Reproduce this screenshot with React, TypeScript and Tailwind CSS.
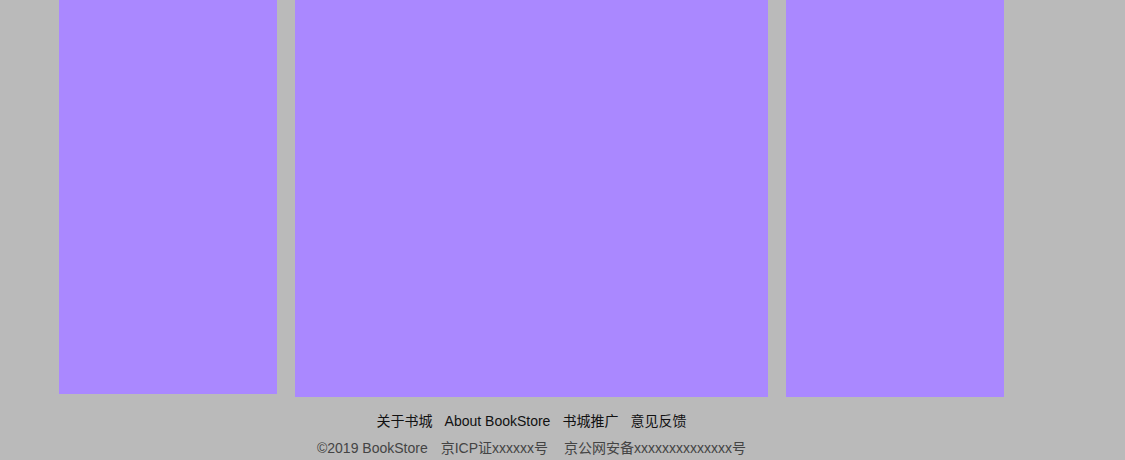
import React from 'react';

const links = ['关于书城', 'About BookStore', '书城推广', '意见反馈'];

export default function App() {
  return (
    <div
      className="h-[460px] overflow-hidden bg-[#bababa] text-[14px]"
      style={{ fontFamily: '"Liberation Sans", Arial, "Noto Sans CJK SC", sans-serif' }}
    >
      <div className="ml-[59px] w-[945px]">
        <div className="flex items-start gap-[18px]">
          <div className="h-[394px] w-[218px] bg-[#aa88ff]" />
          <div className="h-[397px] w-[473px] bg-[#aa88ff]" />
          <div className="h-[397px] w-[218px] bg-[#aa88ff]" />
        </div>
        <div className="pt-[14px] text-center">
          <div className="flex justify-center gap-[12px] leading-[20px] text-[#111]">
            {links.map((l) => (
              <span key={l}>{l}</span>
            ))}
          </div>
          <div className="mt-[7px] flex justify-center gap-[13px] leading-[20px] text-[#444]">
            <span>©2019 BookStore</span>
            <span>京ICP证xxxxxx号</span>
            <span className="ml-[3px]">京公网安备xxxxxxxxxxxxxx号</span>
          </div>
        </div>
      </div>
    </div>
  );
}
